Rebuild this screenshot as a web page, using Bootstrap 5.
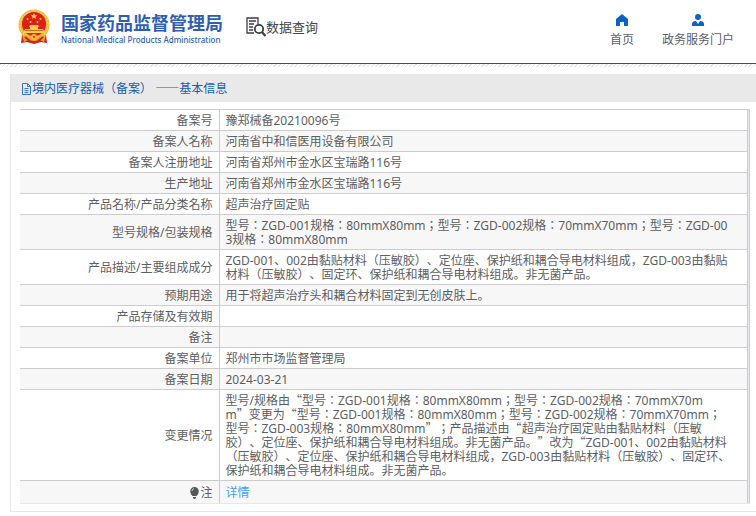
<!DOCTYPE html>
<html lang="zh-CN">
<head>
<meta charset="utf-8">
<meta name="viewport" content="width=device-width, initial-scale=1">
<title>国家药品监督管理局 数据查询</title>
<link href="https://cdn.jsdelivr.net/npm/bootstrap@5.3.0/dist/css/bootstrap.min.css" rel="stylesheet">
<style>
body { font-family: "Noto Sans", "Noto Sans CJK JP", sans-serif; font-size: 12px; line-height: 14px; color: #5c5e62; background: #fff; text-spacing-trim: space-all; }
.panel { font-feature-settings: "locl" 0, "chws" 0; }
.site-header { height: 64px; border-bottom: 1px solid #0b5cab; padding-left: 17px; padding-right: 22px; }
.hatch { height: 3px; background: repeating-linear-gradient(135deg, #e4e4e4 0 1px, #fff 1px 3px); }
.brand { margin-bottom: 9px; gap: 10px; }
.brand-name { font: 700 18px/26px "Noto Sans CJK SC", sans-serif; color: #2e5fb2; }
.brand-sub { font: 500 8px/10px "Noto Sans", sans-serif; color: #2e5fb2; }
.query { font: 400 13px/20px "Noto Sans CJK SC", sans-serif; color: #444; margin-left: 23px; margin-bottom: 9px; }
.top-link { color: #5c5e62; gap: 6px; line-height: 16px; }
.top-nav { gap: 28px; margin-bottom: 2px; }
.panel { margin: 7px 0 0 10px; border: 1px solid #e6e6e6; border-right: 0; border-top: 0; }
.panel-title { background: #e9e9e9; color: #1260b8; font-size: 12px; line-height: 14px; padding: 8px 10px 6px; }
.panel-content { padding: 7px 6px 7px 9px; }
.table-frame { border: 1px solid #ccc; border-left: 0; border-bottom-color: #e6e6f0; padding-right: 1px; background: #e9e9ef; }
.detail { color: #5c5e62; border-right: 1px solid #ccc; background: #fff; }
.detail th, .detail td { padding: 4px 6px 2px; border-bottom: 1px solid #ccc; height: 21px; }
.detail th { width: 199px; font-weight: 400; text-align: right; border-right: 1px solid #ccc; }
.detail td { white-space: nowrap; }
.detail tr:nth-child(even) { background: #f7f7f7; }
.detail tr:first-child > * { padding-bottom: 1px; height: 20px; }
.detail tr:last-child > * { border-bottom: 0; padding-top: 5px; padding-bottom: 3px; }
.detail a { color: #409eff; }
.quo { font-family: "Noto Sans CJK SC", sans-serif; line-height: 0; }
.dash { font-family: "Noto Sans CJK SC", sans-serif; line-height: 0; font-feature-settings: normal; }
</style>
<script src="https://cdn.jsdelivr.net/npm/bootstrap@5.3.0/dist/js/bootstrap.bundle.min.js"></script>
</head>
<body>
<header class="site-header d-flex align-items-center">
  <div class="brand d-flex align-items-center">
    <svg width="34" height="36" viewBox="0 0 34 36" aria-hidden="true">
      <path d="M5 26L4 34l6-1 7 2 7-2 6 1-1-8z" fill="#d7201c"/>
      <circle cx="17" cy="16" r="15.5" fill="#e9b73a"/>
      <circle cx="17" cy="16" r="14" fill="none" stroke="#f6d35e" stroke-width="1.5" stroke-dasharray="2 1"/>
      <circle cx="17" cy="15" r="12" fill="#dc2019"/>
      <path d="M17 4l1 2.200h2.300l-1.800 1.500.7 2.300-2.200-1.400-2.200 1.400.7-2.300-1.800-1.500H16z" fill="#f8cf45"/>
      <g fill="#f8cf45"><circle cx="10.500" cy="10" r="1"/><circle cx="23.500" cy="10" r="1"/><circle cx="13.500" cy="13" r="1"/><circle cx="20.500" cy="13" r="1"/><path d="M13 16h8l1 2h-1v2h5l2 4H6l2-4h5v-2h-1z"/></g>
      <path d="M8 21.500h18" stroke="#cf6a20"/>
      <path d="M5 26q6 1 9 3l3 1 3-1q3-2 9-3l-2 7-4-2-6 1-6-1-4 2z" fill="#e2a52c"/>
      <path d="M8 28l5 4M26 28l-5 4" stroke="#d7201c" stroke-width="2"/>
      <circle cx="17" cy="28" r="3" fill="#f0bd37"/><circle cx="17" cy="28" r="1" fill="#d7201c"/>
    </svg>
    <div>
      <div class="brand-name">国家药品监督管理局</div>
      <div class="brand-sub">National Medical Products Administration</div>
    </div>
  </div>
  <div class="query d-flex align-items-center">
    <svg width="20" height="20" viewBox="0 0 20 20" fill="none" stroke="#3c3c4c" stroke-width="1.300" aria-hidden="true">
      <path d="M12 7V1H1v15h7M3 4h7M3 7h5M3 10h4M3 13h4"/><circle cx="13" cy="12" r="4.200" stroke-width="1.800"/><path d="M16 15l3.500 4" stroke-width="2.200"/>
    </svg>
    <span>数据查询</span>
  </div>
  <nav class="top-nav d-flex ms-auto">
    <a href="#" class="top-link d-flex flex-column align-items-center text-decoration-none">
      <svg width="12" height="12" viewBox="0 0 12 12" fill="#0a62c5" aria-hidden="true"><path d="M6 0l6 5v7H8V8H4v4H0V5z"/></svg>
      <span>首页</span>
    </a>
    <a href="#" class="top-link d-flex flex-column align-items-center text-decoration-none">
      <svg width="12" height="12" viewBox="0 0 12 12" fill="#0a62c5" aria-hidden="true"><circle cx="6" cy="3" r="3"/><path d="M0 12V10q0-3 4-3l2 3 2-3q4 0 4 3v2z"/></svg>
      <span>政务服务门户</span>
    </a>
  </nav>
</header>
<div class="hatch"></div>
<main class="panel">
  <h1 class="panel-title d-flex align-items-center mb-0 fw-normal">
    <svg width="11" height="12" viewBox="0 0 11 12" fill="none" stroke="#3974c0" aria-hidden="true"><path d="M1.500.5h5l3 3v8h-8zM6.500.5v3h3M3.500 5.500h4M3.500 7.500h4M3.500 9.500h4"/></svg>
    <span>境内医疗器械（备案） <span class="dash">——</span>基本信息</span>
  </h1>
  <div class="panel-content">
    <div class="table-frame">
      <table class="detail w-100 align-middle" lang="ja">
        <tbody>
        <tr><th scope="row">备案号</th><td>豫郑械备20210096号</td></tr>
        <tr><th scope="row">备案人名称</th><td>河南省中和信医用设备有限公司</td></tr>
        <tr><th scope="row">备案人注册地址</th><td>河南省郑州市金水区宝瑞路116号</td></tr>
        <tr><th scope="row">生产地址</th><td>河南省郑州市金水区宝瑞路116号</td></tr>
        <tr><th scope="row">产品名称/产品分类名称</th><td>超声治疗固定贴</td></tr>
        <tr><th scope="row">型号规格/包装规格</th><td>型号：ZGD-001规格：80mmX80mm；型号：ZGD-002规格：70mmX70mm；型号：ZGD-00<br>3规格：80mmX80mm</td></tr>
        <tr><th scope="row">产品描述/主要组成成分</th><td>ZGD-001、002由黏贴材料（压敏胶）、定位座、保护纸和耦合导电材料组成，ZGD-003由黏贴<br>材料（压敏胶）、固定环、保护纸和耦合导电材料组成。非无菌产品。</td></tr>
        <tr><th scope="row">预期用途</th><td>用于将超声治疗头和耦合材料固定到无创皮肤上。</td></tr>
        <tr><th scope="row">产品存储及有效期</th><td></td></tr>
        <tr><th scope="row">备注</th><td></td></tr>
        <tr><th scope="row">备案单位</th><td>郑州市市场监督管理局</td></tr>
        <tr><th scope="row">备案日期</th><td>2024-03-21</td></tr>
        <tr><th scope="row">变更情况</th><td>型号/规格由<span class="quo">“</span>型号：ZGD-001规格：80mmX80mm；型号：ZGD-002规格：70mmX70m<br>m<span class="quo">”</span>变更为<span class="quo">“</span>型号：ZGD-001规格：80mmX80mm；型号：ZGD-002规格：70mmX70mm；<br>型号：ZGD-003规格：80mmX80mm<span class="quo">”</span>；产品描述由<span class="quo">“</span>超声治疗固定贴由黏贴材料（压敏<br>胶）、定位座、保护纸和耦合导电材料组成。非无菌产品。<span class="quo">”</span>改为<span class="quo">“</span>ZGD-001、002由黏贴材料<br>（压敏胶）、定位座、保护纸和耦合导电材料组成，ZGD-003由黏贴材料（压敏胶）、固定环、<br>保护纸和耦合导电材料组成。非无菌产品。</td></tr>
        <tr><th scope="row"><svg width="11" height="12" viewBox="0 0 11 12" fill="#55575b" aria-hidden="true"><path d="M5.500 0a4.300 4.300 0 0 1 4.300 4.300Q9.800 7 7.500 9h-4Q1.200 7 1.200 4.300A4.300 4.300 0 0 1 5.500 0zM4 10h3v1L6 12H5l-1-1z"/><path d="M3 4q0-2 2-2.300" stroke="#fff" fill="none" stroke-width=".7"/></svg>注</th><td><a href="#" class="text-decoration-none">详情</a></td></tr>
        </tbody>
      </table>
    </div>
  </div>
</main>
</body>
</html>
